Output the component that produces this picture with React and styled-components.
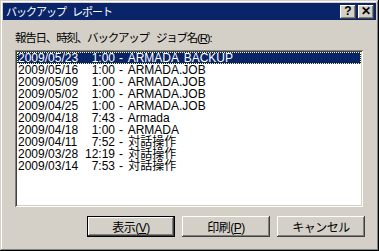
import React from "react";
import styled, { createGlobalStyle } from "styled-components";

const GlobalStyle = createGlobalStyle`
  html, body {
    margin: 0;
    padding: 0;
    background: #d4d0c8;
  }
  * {
    box-sizing: border-box;
  }
`;

const entries = [
  { date: "2009/05/23", time: "1:00", name: "ARMADA BACKUP" },
  { date: "2009/05/16", time: "1:00", name: "ARMADA.JOB" },
  { date: "2009/05/09", time: "1:00", name: "ARMADA.JOB" },
  { date: "2009/05/02", time: "1:00", name: "ARMADA.JOB" },
  { date: "2009/04/25", time: "1:00", name: "ARMADA.JOB" },
  { date: "2009/04/18", time: "7:43", name: "Armada" },
  { date: "2009/04/18", time: "1:00", name: "ARMADA" },
  { date: "2009/04/11", time: "7:52", name: "対話操作" },
  { date: "2009/03/28", time: "12:19", name: "対話操作" },
  { date: "2009/03/14", time: "7:53", name: "対話操作" },
];

const Window = styled.div`
  width: 379px;
  height: 251px;
  display: flex;
  flex-direction: column;
  padding: 3px;
  background: #d4d0c8;
  font-family: "Liberation Sans", "Noto Sans CJK JP", sans-serif;
  font-size: 12px;
  color: #000;
  box-shadow: inset -1px -1px 0 #000, inset 1px 1px 0 #d4d0c8,
    inset -2px -2px 0 #808080, inset 2px 2px 0 #fff;
`;

const TitleBar = styled.div`
  height: 17px;
  display: flex;
  align-items: center;
  padding: 0 2px 0 3px;
  background: #0a246a;
  color: #fff;
`;

const Title = styled.span`
  flex: 1;
  font-size: 11px;
  line-height: 14px;
  letter-spacing: -1px;
  word-spacing: 4px;
`;

const CaptionButton = styled.button`
  width: 16px;
  height: 14px;
  margin-left: ${(p) => (p.$gap ? "2px" : "0")};
  padding: 0;
  border: none;
  background: #d4d0c8;
  font-family: "Liberation Sans", sans-serif;
  font-weight: 700;
  font-size: 12px;
  line-height: 13px;
  color: #000;
  box-shadow: inset -1px -1px 0 #404040, inset 1px 1px 0 #fff,
    inset -2px -2px 0 #808080;
`;

const Body = styled.div`
  flex: 1;
  display: flex;
  flex-direction: column;
  padding: 11px 13px 0 12px;
`;

const Label = styled.div`
  height: 14px;
  line-height: 14px;
  margin-bottom: 5px;
  font-size: 11.5px;
  letter-spacing: -1.2px;
  word-spacing: 5px;
`;

const Key = styled.u`
  text-underline-offset: 1px;
`;

const ListBox = styled.div`
  height: 157px;
  padding: 2px;
  background: #fff;
  box-shadow: inset 1px 1px 0 #808080, inset -1px -1px 0 #fff,
    inset 2px 2px 0 #404040, inset -2px -2px 0 #d4d0c8;
`;

const Row = styled.div`
  display: grid;
  grid-template-columns: 66px 31px 1fr;
  height: 12px;
  line-height: 12px;
  padding-left: 1px;
  white-space: nowrap;
  background: ${(p) => (p.$selected ? "#0a246a" : "transparent")};
  color: ${(p) => (p.$selected ? "#fff" : "#000")};
  outline: ${(p) => (p.$selected ? "1px dotted #ffff80" : "none")};
  outline-offset: -1px;
`;

const Time = styled.span`
  text-align: right;
`;

const Name = styled.span`
  padding-left: 4px;
  word-spacing: 2px;
`;

const ButtonRow = styled.div`
  display: flex;
  justify-content: flex-end;
  gap: 7px;
  margin-top: 9px;
  margin-right: -2px;
`;

const Button = styled.button`
  width: 88px;
  height: 21px;
  padding: 0;
  border: none;
  background: #d4d0c8;
  font-family: "Liberation Sans", "Noto Sans CJK JP", sans-serif;
  font-size: 12px;
  letter-spacing: -0.5px;
  color: #000;
  box-shadow: ${(p) =>
    p.$default
      ? "inset 0 0 0 1px #000, inset -2px -2px 0 #404040, inset 2px 2px 0 #fff, inset -3px -3px 0 #808080"
      : "inset -1px -1px 0 #404040, inset 1px 1px 0 #fff, inset -2px -2px 0 #808080"};
`;

export default function App() {
  return (
    <>
      <GlobalStyle />
      <Window>
        <TitleBar>
          <Title>バックアップ レポート</Title>
          <CaptionButton>?</CaptionButton>
          <CaptionButton $gap>✕</CaptionButton>
        </TitleBar>
        <Body>
          <Label>
            報告日、時刻、バックアップ ジョブ名(<Key>R</Key>):
          </Label>
          <ListBox>
            {entries.map((e, i) => (
              <Row key={i} $selected={i === 0}>
                <span>{e.date}</span>
                <Time>{e.time}</Time>
                <Name>- {e.name}</Name>
              </Row>
            ))}
          </ListBox>
          <ButtonRow>
            <Button $default>
              表示(<Key>V</Key>)
            </Button>
            <Button>
              印刷(<Key>P</Key>)
            </Button>
            <Button>キャンセル</Button>
          </ButtonRow>
        </Body>
      </Window>
    </>
  );
}
